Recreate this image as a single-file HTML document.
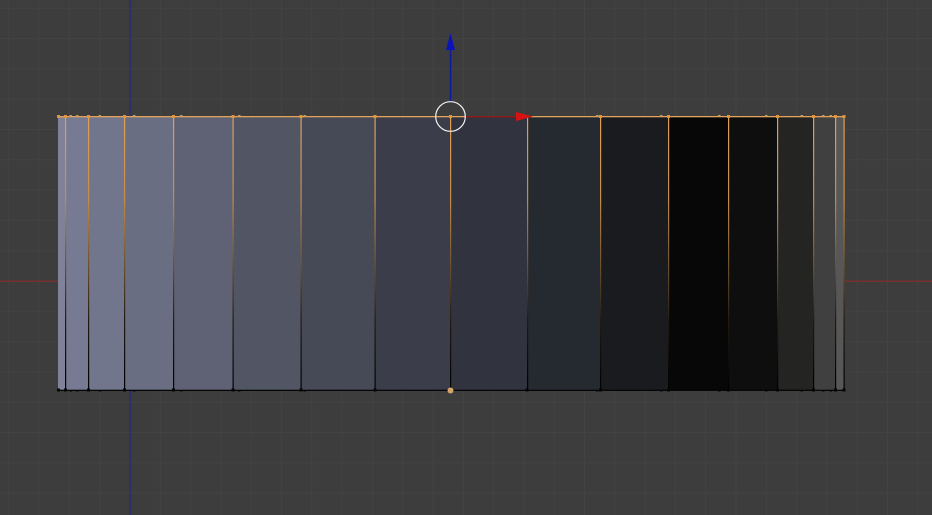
<!DOCTYPE html>
<html>
<head>
<meta charset="utf-8">
<title>Mesh viewport</title>
<style>
html,body{margin:0;padding:0;width:932px;height:515px;overflow:hidden;background:#3d3d3d}
svg{display:block}
</style>
</head>
<body>
<svg width="932" height="515" viewBox="0 0 932 515" xmlns="http://www.w3.org/2000/svg">
<defs>
<linearGradient id="w" gradientUnits="userSpaceOnUse" x1="0" y1="116" x2="0" y2="390">
<stop offset="0" stop-color="#e2a05a"/>
<stop offset=".3" stop-color="#c48c4a"/>
<stop offset=".55" stop-color="#6a5030"/>
<stop offset=".75" stop-color="#221a12"/>
<stop offset="1" stop-color="#000"/>
</linearGradient>
</defs>
<rect width="932" height="515" fill="#3d3d3d"/>
<path fill="none" stroke="#434343" stroke-width="1" d="M8.8 0V515M39.1 0V515M69.4 0V515M99.7 0V515M160.3 0V515M190.6 0V515M220.9 0V515M251.2 0V515M281.5 0V515M311.8 0V515M342.1 0V515M372.4 0V515M402.7 0V515M433 0V515M463.3 0V515M493.6 0V515M523.9 0V515M554.2 0V515M584.5 0V515M614.8 0V515M645.1 0V515M675.4 0V515M705.7 0V515M736 0V515M766.3 0V515M796.6 0V515M826.9 0V515M857.2 0V515M887.5 0V515M917.8 0V515M0 8.3H932M0 38.6H932M0 68.9H932M0 99.2H932M0 129.5H932M0 159.8H932M0 190.1H932M0 220.4H932M0 250.7H932M0 311.3H932M0 341.6H932M0 371.9H932M0 402.2H932M0 432.5H932M0 462.8H932M0 493.1H932"/>
<rect x="129.5" y="0" width="1.4" height="515" fill="#2b2a6c"/>
<rect x="0" y="280.5" width="932" height="1.5" fill="#763030"/>

<rect x="58" y="116" width="8" height="274" fill="#7f8299"/>
<rect x="65.5" y="116" width="23.5" height="274" fill="#767a92"/>
<rect x="88.5" y="116" width="36.5" height="274" fill="#72768c"/>
<rect x="124.5" y="116" width="49.5" height="274" fill="#696e83"/>
<rect x="173.5" y="116" width="60" height="274" fill="#5f6275"/>
<rect x="233" y="116" width="68.5" height="274" fill="#525664"/>
<rect x="301" y="116" width="74.5" height="274" fill="#454a56"/>
<rect x="375" y="116" width="75.5" height="274" fill="#3b3e4a"/>
<rect x="450" y="116" width="78" height="274" fill="#31343e"/>
<rect x="527.5" y="116" width="73.5" height="274" fill="#252930"/>
<rect x="600.5" y="116" width="68.5" height="274" fill="#191b1f"/>
<rect x="668.5" y="116" width="60" height="274" fill="#070708"/>
<rect x="728" y="116" width="49.5" height="274" fill="#0e0e0e"/>
<rect x="777" y="116" width="37" height="274" fill="#242422"/>
<rect x="813.5" y="116" width="22.5" height="274" fill="#404040"/>
<rect x="835.5" y="116" width="9" height="274" fill="#575757"/>

<g fill="url(#w)">
<rect x="65" y="116" width="1.2" height="274"/>
<rect x="88" y="116" width="1.2" height="274"/>
<rect x="124" y="116" width="1.2" height="274"/>
<rect x="173" y="116" width="1.2" height="274"/>
<rect x="232.5" y="116" width="1.2" height="274"/>
<rect x="300.5" y="116" width="1.2" height="274"/>
<rect x="374.5" y="116" width="1.2" height="274"/>
<rect x="450" y="116" width="1.2" height="274"/>
<rect x="527" y="116" width="1.2" height="274"/>
<rect x="600" y="116" width="1.2" height="274"/>
<rect x="668" y="116" width="1.2" height="274"/>
<rect x="728" y="116" width="1.2" height="274"/>
<rect x="777" y="116" width="1.2" height="274"/>
<rect x="813" y="116" width="1.2" height="274"/>
<rect x="835" y="116" width="1.2" height="274"/>
<rect x="843.5" y="116" width="1.2" height="274"/>
</g>

<rect x="58" y="116" width="786" height="1.3" fill="#e2a25c"/>
<rect x="58" y="389.7" width="786" height="1.3" fill="#060606"/>

<g fill="#e0953f">
<rect x="57" y="115" width="3" height="3"/>
<rect x="64" y="115" width="3" height="3"/>
<rect x="87" y="115" width="3" height="3"/>
<rect x="123" y="115" width="3" height="3"/>
<rect x="172" y="115" width="3" height="3"/>
<rect x="231.500" y="115" width="3" height="3"/>
<rect x="299.500" y="115" width="3" height="3"/>
<rect x="373.500" y="115" width="3" height="3"/>
<rect x="449" y="115" width="3" height="3"/>
<rect x="599" y="115" width="3" height="3"/>
<rect x="667" y="115" width="3" height="3"/>
<rect x="727" y="115" width="3" height="3"/>
<rect x="776" y="115" width="3" height="3"/>
<rect x="812" y="115" width="3" height="3"/>
<rect x="834" y="115" width="3" height="3"/>
<rect x="842.500" y="115" width="3" height="3"/>
</g>
<g fill="#c99a5e">
<rect x="69.500" y="115" width="2.500" height="1.500"/>
<rect x="76" y="115" width="2.500" height="1.500"/>
<rect x="98.500" y="115" width="2.500" height="1.500"/>
<rect x="133" y="115" width="2.500" height="1.500"/>
<rect x="180" y="115" width="2.500" height="1.500"/>
<rect x="238" y="115" width="2.500" height="1.500"/>
<rect x="303.500" y="115" width="2.500" height="1.500"/>
<rect x="596" y="115" width="2.500" height="1.500"/>
<rect x="660" y="115" width="2.500" height="1.500"/>
<rect x="718" y="115" width="2.500" height="1.500"/>
<rect x="765" y="115" width="2.500" height="1.500"/>
<rect x="800.500" y="115" width="2.500" height="1.500"/>
<rect x="822" y="115" width="2.500" height="1.500"/>
<rect x="829.500" y="115" width="2.500" height="1.500"/>
</g>

<g fill="#050505">
<rect x="57" y="388.500" width="3" height="3"/>
<rect x="64" y="388.500" width="3" height="3"/>
<rect x="69.500" y="390" width="2.500" height="1.500"/>
<rect x="76" y="390" width="2.500" height="1.500"/>
<rect x="87" y="388.500" width="3" height="3"/>
<rect x="98.500" y="390" width="2.500" height="1.500"/>
<rect x="123" y="388.500" width="3" height="3"/>
<rect x="133" y="390" width="2.500" height="1.500"/>
<rect x="172" y="388.500" width="3" height="3"/>
<rect x="180" y="390" width="2.500" height="1.500"/>
<rect x="231.500" y="388.500" width="3" height="3"/>
<rect x="238" y="390" width="2.500" height="1.500"/>
<rect x="299.500" y="388.500" width="3" height="3"/>
<rect x="303.500" y="390" width="2.500" height="1.500"/>
<rect x="373.500" y="388.500" width="3" height="3"/>
<rect x="525.500" y="388.500" width="3" height="3"/>
<rect x="596" y="390" width="2.500" height="1.500"/>
<rect x="599" y="388.500" width="3" height="3"/>
<rect x="660" y="390" width="2.500" height="1.500"/>
<rect x="667" y="388.500" width="3" height="3"/>
<rect x="718" y="390" width="2.500" height="1.500"/>
<rect x="727" y="388.500" width="3" height="3"/>
<rect x="765" y="390" width="2.500" height="1.500"/>
<rect x="776" y="388.500" width="3" height="3"/>
<rect x="800.500" y="390" width="2.500" height="1.500"/>
<rect x="812" y="388.500" width="3" height="3"/>
<rect x="822" y="390" width="2.500" height="1.500"/>
<rect x="829.500" y="390" width="2.500" height="1.500"/>
<rect x="834" y="388.500" width="3" height="3"/>
<rect x="842.500" y="388.500" width="3" height="3"/>
</g>
<circle cx="450.500" cy="390.500" r="3" fill="#d5a468"/>

<rect x="466" y="116" width="62" height="1.500" fill="#8c1c1c"/>
<path d="M516 112L533 116.500L516 121Z" fill="#d81212"/>
<rect x="449.800" y="48" width="1.500" height="54" fill="#0c1aa0"/>
<path d="M450.500 33L455 50H446Z" fill="#0a14b8"/>
<circle cx="450.500" cy="116.500" r="14.800" fill="none" stroke="#f2f2f2" stroke-width="1.200"/>
</svg>
</body>
</html>
